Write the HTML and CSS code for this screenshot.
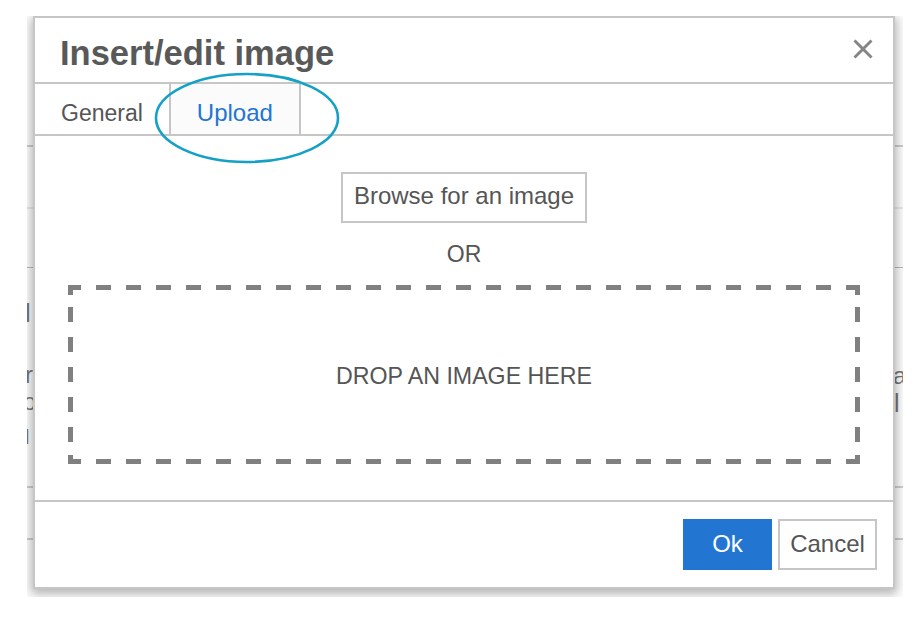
FILE: index.html
```html
<!DOCTYPE html>
<html>
<head>
<meta charset="utf-8">
<title>Insert/edit image</title>
<link rel="stylesheet" href="styles.css">
</head>
<body>
<div class="stage">
  <div class="backdrop">
    <div class="bg-row r1"></div>
    <div class="bg-row r2"></div>
    <div class="bg-row r3"></div>
    <div class="bg-mid">
      <div class="frag-left">
        <span class="f1">l</span>
        <span class="f2">r</span>
        <span class="f3">o|</span>
        <span class="f4">l</span>
      </div>
      <div class="frag-right">
        <span class="g1">a</span>
        <span class="g2">l</span>
      </div>
    </div>
    <div class="bg-row r5"></div>
    <div class="bg-row r6"></div>
  </div>

  <div class="dialog">
    <div class="dlg-head">
      <h1 class="title">Insert/edit image</h1>
      <svg class="close" viewBox="0 0 20 20" width="20" height="20" aria-label="Close">
        <path d="M1.5 1.5 L18.5 18.5 M18.5 1.5 L1.5 18.5" stroke="#858585" stroke-width="2.9" fill="none"/>
      </svg>
    </div>
    <div class="tabs">
      <div class="tab">General</div>
      <div class="tab active">Upload</div>
    </div>
    <div class="dlg-body">
      <button class="browse">Browse for an image</button>
      <div class="or">OR</div>
      <div class="drop">DROP AN IMAGE HERE</div>
    </div>
    <div class="dlg-foot">
      <button class="btn ok">Ok</button>
      <button class="btn cancel">Cancel</button>
    </div>
  </div>
</div>
<svg class="annot" width="924" height="624" viewBox="0 0 924 624">
  <ellipse cx="247" cy="118" rx="91" ry="44" fill="none" stroke="#15a0c6" stroke-width="2.6"/>
</svg>
</body>
</html>
```

FILE: styles.css
```css
* {
  box-sizing: border-box;
}

body {
  margin: 0;
  width: 924px;
  height: 624px;
  overflow: hidden;
  position: relative;
  background: #fff;
  font-family: "Liberation Sans", Arial, Helvetica, sans-serif;
}

.stage {
  position: relative;
  margin: 16px 0 0 27px;
  width: 876px;
  height: 581px;
  overflow: hidden;
  background: #fff;
}

/* page behind the dialog */
.backdrop {
  display: flex;
  flex-direction: column;
  height: 100%;
}

.bg-row.r1 {
  height: 131px;
  border-bottom: 2px solid #cfcfcf;
}

.bg-row.r2 {
  height: 62px;
  border-bottom: 2px solid #ececec;
}

.bg-row.r3 {
  height: 59px;
  border-bottom: 1px solid #bdbdbd;
}

.bg-mid {
  height: 220px;
  border-bottom: 2px solid #d0d0d0;
  display: flex;
  justify-content: space-between;
  color: #777;
}

.frag-left {
  display: flex;
  flex-direction: column;
  align-items: flex-start;
  margin-left: -2px;
  padding-top: 31px;
}

.frag-left span,
.frag-right span {
  display: block;
}

.f1 {
  font-size: 26px;
  line-height: 28px;
}

.f2 {
  font-size: 24px;
  line-height: 27px;
  margin-top: 34px;
}

.f3 {
  font-size: 24px;
  line-height: 28px;
  margin-left: -2px;
}

.f4 {
  font-size: 20px;
  line-height: 24px;
  margin-top: 9px;
}

.frag-right {
  width: 10px;
  padding-top: 95px;
}

.g1 {
  font-size: 24px;
  line-height: 26px;
}

.g2 {
  font-size: 25px;
  line-height: 28px;
  padding-left: 1px;
}

.bg-row.r5 {
  height: 52px;
  border-bottom: 2px solid #cfcfcf;
}

.bg-row.r6 {
  flex: 1;
}

/* dialog */
.dialog {
  position: absolute;
  left: 6px;
  top: 0;
  width: 862px;
  height: 573px;
  border: 2px solid #c6c6c6;
  background: #fff;
  box-shadow: 0 3px 10px 2px rgba(0, 0, 0, 0.3);
  display: flex;
  flex-direction: column;
}

.dlg-head {
  height: 66px;
  flex: none;
  display: flex;
  align-items: flex-start;
  justify-content: space-between;
  padding: 15px 20px 0 25px;
  border-bottom: 2px solid #c6c6c6;
}

.title {
  margin: 0;
  font-size: 34.5px;
  line-height: 40px;
  font-weight: bold;
  color: #595959;
}

.close {
  margin-top: 6px;
  flex: none;
}

.tabs {
  height: 52px;
  flex: none;
  display: flex;
  border-bottom: 2px solid #c6c6c6;
}

.tab {
  padding: 8px 26px 0;
  line-height: 42px;
  font-size: 23px;
  color: #555;
}

.tab.active {
  border-left: 2px solid #c6c6c6;
  border-right: 2px solid #c6c6c6;
  background: #fbfbfb;
  color: #2276d2;
  font-size: 24px;
}

.dlg-body {
  flex: 1;
  display: flex;
  flex-direction: column;
  align-items: center;
  padding: 36px 33px;
}

.browse {
  height: 51px;
  padding: 0 11px 3px;
  border: 2px solid #c6c6c6;
  background: #fff;
  font-family: inherit;
  font-size: 24px;
  color: #555;
  display: flex;
  align-items: center;
}

.or {
  margin-top: 17px;
  font-size: 23px;
  line-height: 28px;
  color: #555;
}

.drop {
  margin-top: 17px;
  align-self: stretch;
  height: 179px;
  display: flex;
  align-items: center;
  justify-content: center;
  padding-top: 4px;
  font-size: 23.2px;
  color: #555;
  background:
    linear-gradient(#808080, #808080) 0 0 / 5px 10px no-repeat,
    linear-gradient(#808080, #808080) 100% 0 / 5px 10px no-repeat,
    linear-gradient(#808080, #808080) 0 100% / 5px 9px no-repeat,
    linear-gradient(#808080, #808080) 100% 100% / 5px 9px no-repeat,
    linear-gradient(90deg, #808080 15px, transparent 15px) -2px 0 / 30px 5px repeat-x,
    linear-gradient(90deg, #808080 15px, transparent 15px) -2px 100% / 30px 5px repeat-x,
    linear-gradient(180deg, #808080 15px, transparent 15px) 0 22px / 5px 30px repeat-y,
    linear-gradient(180deg, #808080 15px, transparent 15px) 100% 22px / 5px 30px repeat-y,
    #fff;
}

.dlg-foot {
  flex: none;
  border-top: 2px solid #c6c6c6;
  padding: 17px 16px;
  display: flex;
  justify-content: flex-end;
  gap: 6px;
}

.btn {
  height: 51px;
  font-family: inherit;
  font-size: 24px;
  padding: 0 0 2px;
  display: flex;
  align-items: center;
  justify-content: center;
}

.ok {
  width: 89px;
  border: 0;
  background: #2276d2;
  color: #fff;
}

.cancel {
  width: 99px;
  border: 2px solid #c6c6c6;
  background: #fff;
  color: #555;
}

.annot {
  position: absolute;
  left: 0;
  top: 0;
  pointer-events: none;
}
```
